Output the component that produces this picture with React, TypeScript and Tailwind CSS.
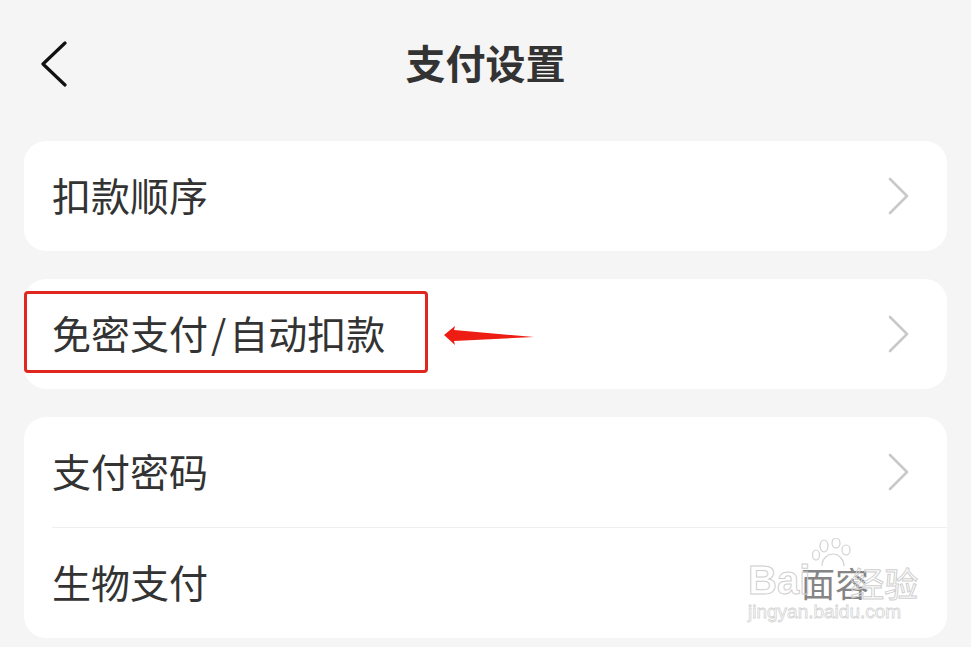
import React from "react";

const font = { fontFamily: '"Noto Sans CJK SC", "Noto Sans", sans-serif' };

function Chevron() {
  return (
    <svg width="24" height="38" viewBox="0 0 24 38" fill="none">
      <polyline points="3,2 20,19 3,36" stroke="#c9c9c9" strokeWidth="2.6" strokeLinecap="round" strokeLinejoin="round" />
    </svg>
  );
}

function Row({ label, chevron = true, value }: { label: React.ReactNode; chevron?: boolean; value?: string }) {
  return (
    <div className="h-[110px] flex items-center justify-between pl-[28px] pr-[36px]">
      <span className="text-[39px] leading-none text-[#333333] -mt-[3px]">{label}</span>
      <div className="flex items-center gap-4">
        {value && <span className="text-[34px] leading-none text-[#858585] mr-[42px]">{value}</span>}
        {chevron && <Chevron />}
      </div>
    </div>
  );
}

export default function App() {
  return (
    <div className="w-[971px] h-[647px] bg-[#f5f5f5] overflow-hidden relative" style={font}>
      <div className="h-[130px] relative flex items-center justify-center">
        <div className="absolute left-[39px] top-[41px]">
          <svg width="30" height="46" viewBox="0 0 30 46" fill="none">
            <polyline points="26,2 4,23 26,44" stroke="#111111" strokeWidth="3.2" strokeLinecap="round" strokeLinejoin="round" />
          </svg>
        </div>
        <h1 className="text-[40px] font-bold leading-none text-[#333333] -mt-[6px]">支付设置</h1>
      </div>
      <div className="px-[24px] pt-[11px] flex flex-col gap-[28px]">
        <div className="bg-white rounded-[22px]">
          <Row label="扣款顺序" />
        </div>
        <div className="bg-white rounded-[22px] relative">
          <Row
            label={
              <>
                免密支付<span className="mx-[3px]">/</span>自动扣款
              </>
            }
          />
          <div className="absolute left-0 top-[12px] w-[404px] h-[82px] border-[3px] border-[#e0261f] rounded-[4px]" />
          <svg className="absolute left-[394px] top-[44px]" width="120" height="24" viewBox="418 323 120 24">
            <polygon points="444,335 455,326 454,330 534,337 454,341 455,345" fill="#ee1d14" />
          </svg>
        </div>
        <div className="bg-white rounded-[22px] overflow-hidden">
          <Row label="支付密码" />
          <div className="ml-[28px] h-px bg-[#efefef]" />
          <Row label="生物支付" chevron={false} value="面容" />
        </div>
      </div>
      <div className="absolute left-[748px] top-[538px] w-[175px] h-[90px] pointer-events-none">
        <svg className="absolute left-[64px] top-0" width="44" height="30" viewBox="0 0 44 30" fill="none" stroke="#d2d2d2" strokeWidth="1.2">
          <ellipse cx="12" cy="8" rx="4" ry="6" />
          <ellipse cx="24" cy="5" rx="4" ry="5" />
          <ellipse cx="34" cy="12" rx="4" ry="5" />
          <ellipse cx="4" cy="17" rx="3.5" ry="5" />
          <path d="M10 28 C10 20 16 16 21 16 C27 16 32 22 32 28" />
        </svg>
        <div className="absolute left-0 top-[22px] flex items-end">
          <span className="text-[40px] leading-none font-bold text-transparent [-webkit-text-stroke:1px_#cfcfcf]" style={{ fontFamily: '"Liberation Sans", sans-serif' }}>Bai</span>
          <span className="text-[34px] leading-none text-transparent [-webkit-text-stroke:1px_#cfcfcf] ml-[40px]">经验</span>
        </div>
        <div className="absolute left-0 top-[64px] text-[19px] leading-none text-transparent [-webkit-text-stroke:0.8px_#d5d5d5]" style={{ fontFamily: '"Liberation Sans", sans-serif' }}>
          jingyan.baidu.com
        </div>
      </div>
    </div>
  );
}
